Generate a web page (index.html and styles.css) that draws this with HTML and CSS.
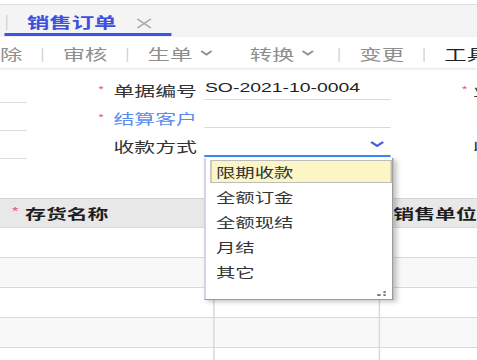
FILE: index.html
```html
<!DOCTYPE html>
<html lang="zh-CN">
<head>
<meta charset="utf-8">
<title>销售订单</title>
<link rel="stylesheet" href="styles.css">
</head>
<body>
<div class="page">
  <div class="topgap"></div>
  <div class="tabbar">
    <div class="tab">
      <span class="tab-text">销售订单</span>
      <svg class="tab-close" viewBox="0 0 11 11"><path d="M1 1L10 10M10 1L1 10" stroke="#a9a9a9" stroke-width="1.2" fill="none"/></svg>
    </div>
  </div>
  <div class="toolbar">
    <span class="tb-item">删除</span><span class="tb-sep"></span>
    <span class="tb-item">审核</span><span class="tb-sep"></span>
    <span class="tb-item dd">生单<svg class="tb-chev" viewBox="0 0 9 6"><path d="M1 1l3.5 3.5L8 1" fill="none" stroke="#8e8e8e" stroke-width="1.6"/></svg></span>
    <span class="tb-item dd dd-end">转换<svg class="tb-chev" viewBox="0 0 9 6"><path d="M1 1l3.5 3.5L8 1" fill="none" stroke="#8e8e8e" stroke-width="1.6"/></svg></span><span class="tb-sep"></span>
    <span class="tb-item">变更</span><span class="tb-sep"></span>
    <span class="tb-item dark">工具</span>
  </div>

  <div class="form">
    <div class="row">
      <div class="stub"></div>
      <div class="label"><span class="req">*</span>单据编号</div>
      <div class="field"><span class="value">SO-2021-10-0004</span></div>
      <div class="extra"><span class="req">*</span>业务日期</div>
    </div>
    <div class="row">
      <div class="stub"></div>
      <div class="label link"><span class="req">*</span>结算客户</div>
      <div class="field"></div>
    </div>
    <div class="row">
      <div class="stub"></div>
      <div class="label">收款方式</div>
      <div class="field focus">
        <svg class="chev" viewBox="0 0 10 6"><path d="M1 1l4 4 4-4" fill="none" stroke="#4a5fe0" stroke-width="1.8"/></svg>
        <div class="dropdown">
          <div class="opt sel">限期收款</div>
          <div class="opt">全额订金</div>
          <div class="opt">全额现结</div>
          <div class="opt">月结</div>
          <div class="opt">其它</div>
          <svg class="grip" viewBox="0 0 6 5"><rect x="0" y="3.3" width="2.4" height="1.5" fill="#555"/><rect x="4.2" y="0.3" width="1.6" height="1.5" fill="#555"/><rect x="4.2" y="3.3" width="1.6" height="1.5" fill="#555"/></svg>
        </div>
      </div>
      <div class="extra no-req">收款协议</div>
    </div>
  </div>

  <div class="grid">
    <div class="grow head">
      <div class="c1"><span class="hreq">*</span>存货名称</div>
      <div class="c2"></div>
      <div class="c3">销售单位</div>
    </div>
    <div class="grow"><div class="c1"></div><div class="c2"></div><div class="c3"></div></div>
    <div class="grow alt"><div class="c1"></div><div class="c2"></div><div class="c3"></div></div>
    <div class="grow"><div class="c1"></div><div class="c2"></div><div class="c3"></div></div>
    <div class="grow alt"><div class="c1"></div><div class="c2"></div><div class="c3"></div></div>
    <div class="grow"><div class="c1"></div><div class="c2"></div><div class="c3"></div></div>
  </div>
</div>
</body>
</html>
```

FILE: styles.css
```css
html, body {
  margin: 0;
  padding: 0;
  overflow: hidden;
  background: #fff;
}
body {
  width: 477px;
  height: 360px;
  font-family: "Liberation Sans", "Noto Sans CJK SC", sans-serif;
  color: #333;
}
.page {
  width: 320px;
  height: 360px;
  overflow: hidden;
  transform: scaleX(1.490625);
  transform-origin: 0 0;
}
.topgap { height: 4px; }

/* tab bar */
.tabbar {
  height: 32px;
  border-top: 1px solid #dcdcdc;
  background: #f4f4f4;
  display: flex;
  align-items: flex-start;
}
.tab {
  position: relative;
  display: flex;
  align-items: center;
  height: 22px;
  margin-left: 3.4px;
  padding: 6px 13.4px 0 14.7px;
  border-bottom: 3px solid #3a55e6;
}
.tab::before {
  content: "";
  position: absolute;
  left: 0.6px;
  top: 10px;
  width: 1px;
  height: 15px;
  background: #d6d6d6;
}
.tab-text {
  font-family: "Noto Sans CJK SC", sans-serif;
  font-size: 15px;
  font-weight: bold;
  line-height: 22px;
  color: #3d4fdc;
}
.tab-close {
  width: 11.4px;
  height: 11px;
  margin-left: 12.5px;
  margin-top: 3px;
}

/* toolbar */
.toolbar {
  display: flex;
  align-items: center;
  height: 29px;
  padding-top: 2px;
  margin-left: -28px;
  background: #fff;
  box-shadow: 0 1px 2px rgba(0, 0, 0, 0.13);
  font-family: "Noto Sans CJK SC", sans-serif;
  font-size: 15px;
  color: #8e8e8e;
}
.tb-item {
  display: flex;
  align-items: center;
  padding: 0 13px;
  line-height: 20px;
  white-space: nowrap;
  flex: none;
}
.tb-item.dd { padding-right: 12px; }
.tb-item.dd-end { padding-right: 16px; }
.tb-item.dark { color: #222; }
.tb-chev {
  width: 9px;
  height: 6px;
  margin-left: 4.5px;
  margin-top: -1px;
}
.tb-sep {
  flex: none;
  width: 1px;
  height: 14px;
  margin-top: 3px;
  background: #d6d6d6;
}

/* form */
.form {
  padding-top: 8px;
  font-size: 14px;
}
.row {
  display: flex;
  height: 28px;
}
.stub {
  flex: none;
  width: 18.1px;
  height: 26px;
  border-bottom: 1px solid #dcdcdc;
}
.label {
  flex: none;
  width: 114px;
  display: flex;
  justify-content: flex-end;
  align-items: center;
  line-height: 28px;
  color: #333;
  font-family: "Noto Sans CJK SC", sans-serif;
}
.label.link { color: #5a8cf0; }
.req {
  align-self: flex-start;
  font-family: "Liberation Sans", sans-serif;
  font-size: 9px;
  line-height: 26px;
  color: #f0447c;
  margin-right: 6.5px;
}
.field {
  position: relative;
  flex: none;
  display: flex;
  align-items: center;
  width: 124.8px;
  height: 23px;
  margin-left: 5.4px;
  border-bottom: 1px solid #d9d9d9;
}
.field.focus { border-bottom: 2px solid #3f87f5; }
.value {
  font-family: "Liberation Sans", sans-serif;
  font-size: 13px;
  color: #222;
}
.chev {
  width: 10px;
  height: 6px;
  margin-left: auto;
  margin-right: 4px;
}
.extra {
  flex: none;
  display: flex;
  align-items: center;
  margin-left: 47.6px;
  line-height: 28px;
  white-space: nowrap;
  color: #333;
  font-family: "Noto Sans CJK SC", sans-serif;
}
.extra .req { margin-right: 3.9px; }
.extra.no-req { margin-left: 55px; }

/* dropdown */
.dropdown {
  position: absolute;
  left: 0;
  top: calc(100% + 3px);
  z-index: 5;
  box-sizing: border-box;
  width: 126.1px;
  height: 142px;
  padding-top: 1px;
  display: flex;
  flex-direction: column;
  background: #fff;
  border-left: 1px solid #c6c3ea;
  border-right: 1px solid #9a9a9a;
  border-bottom: 1px solid #9a9a9a;
  box-shadow: 2px 2px 4px rgba(0, 0, 0, 0.22);
  font-family: "Noto Sans CJK SC", sans-serif;
  font-size: 13px;
  color: #333;
}
.opt {
  box-sizing: border-box;
  display: flex;
  align-items: center;
  height: 25px;
  margin-left: 3px;
  padding-left: 2.4px;
  border: 1px solid transparent;
  white-space: nowrap;
}
.opt.sel {
  height: 23px;
  margin-top: 1px;
  margin-bottom: 1px;
  background: #fcf5c6;
  border-color: #bcbcbc;
}
.grip {
  align-self: flex-end;
  width: 6px;
  height: 5px;
  margin-top: auto;
  margin-right: 3.4px;
  margin-bottom: 3px;
}

/* grid */
.grid {
  margin-top: 38px;
  font-size: 14px;
  font-family: "Noto Sans CJK SC", sans-serif;
}
.grow {
  display: flex;
  height: 29px;
  border-bottom: 1px solid #d9d9d9;
}
.grow.head {
  height: 28px;
  border-top: 1px solid #d4d4d4;
  background: #e8e8e8;
  font-weight: bold;
  color: #1e1e1e;
}
.grow.alt { background: #f8f8f8; }
.c1, .c2, .c3 {
  box-sizing: border-box;
  display: flex;
  align-items: center;
  white-space: nowrap;
}
.c1 {
  flex: none;
  width: 144.2px;
  padding-left: 8px;
  border-right: 1px solid #dadada;
}
.c2 {
  flex: none;
  width: 110.7px;
  border-right: 1px solid #dadada;
}
.c3 {
  flex: 1;
  padding-left: 9px;
}
.hreq {
  align-self: flex-start;
  font-family: "Liberation Sans", sans-serif;
  font-size: 11px;
  line-height: 24px;
  color: #f0447c;
  margin-right: 4.5px;
  font-weight: normal;
}
```
